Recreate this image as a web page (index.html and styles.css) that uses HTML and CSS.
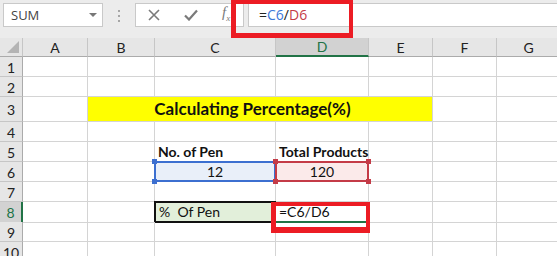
FILE: index.html
```html
<!DOCTYPE html>
<html lang="en">
<head>
    <meta charset="UTF-8">
    <title>Calculating Percentage</title>
    <link rel="stylesheet" href="styles.css">
</head>
<body>
    <div class="app">
        <!-- Formula bar -->
        <div class="toolbar">
            <div class="name-box">
                <span>SUM</span>
                <span class="caret"></span>
            </div>
            <div class="grip"><i></i><i></i><i></i></div>
            <div class="fx-buttons">
                <svg width="12" height="12" viewBox="0 0 12 12"><path d="M1 1 L11 11 M11 1 L1 11" stroke="#7a7a7a" stroke-width="1.6" fill="none"/></svg>
                <svg width="14" height="12" viewBox="0 0 14 12"><path d="M1 6.5 L5 10.5 L13 1.5" stroke="#7a7a7a" stroke-width="2.2" fill="none"/></svg>
                <span class="fx">f<sub>x</sub></span>
            </div>
            <div class="formula-input">=<span class="ref-c">C6</span>/<span class="ref-d">D6</span></div>
            <div class="callout callout-bar"></div>
        </div>

        <!-- Sheet -->
        <div class="sheet">
            <div class="row head-row">
                <div class="corner"><span class="corner-tri"></span></div>
                <div class="col-head">A</div>
                <div class="col-head">B</div>
                <div class="col-head">C</div>
                <div class="col-head active">D</div>
                <div class="col-head">E</div>
                <div class="col-head">F</div>
                <div class="col-head">G</div>
            </div>
            <div class="row">
                <div class="row-head">1</div>
                <div class="cell"></div><div class="cell"></div><div class="cell"></div><div class="cell"></div><div class="cell"></div><div class="cell"></div><div class="cell"></div>
            </div>
            <div class="row">
                <div class="row-head">2</div>
                <div class="cell"></div><div class="cell"></div><div class="cell"></div><div class="cell"></div><div class="cell"></div><div class="cell"></div><div class="cell"></div>
            </div>
            <div class="row tall">
                <div class="row-head">3</div>
                <div class="cell"></div>
                <div class="cell title">Calculating Percentage(%)</div>
                <div class="cell"></div><div class="cell"></div>
            </div>
            <div class="row">
                <div class="row-head">4</div>
                <div class="cell"></div><div class="cell"></div><div class="cell"></div><div class="cell"></div><div class="cell"></div><div class="cell"></div><div class="cell"></div>
            </div>
            <div class="row">
                <div class="row-head">5</div>
                <div class="cell"></div><div class="cell"></div>
                <div class="cell bold">No. of Pen</div>
                <div class="cell bold">Total Products</div>
                <div class="cell"></div><div class="cell"></div><div class="cell"></div>
            </div>
            <div class="row">
                <div class="row-head">6</div>
                <div class="cell"></div><div class="cell"></div>
                <div class="cell ref ref-blue">12
                    <span class="handle tl"></span><span class="handle tr"></span><span class="handle bl"></span><span class="handle br"></span>
                </div>
                <div class="cell ref ref-red">120
                    <span class="handle tl"></span><span class="handle tr"></span><span class="handle bl"></span><span class="handle br"></span>
                </div>
                <div class="cell"></div><div class="cell"></div><div class="cell"></div>
            </div>
            <div class="row">
                <div class="row-head">7</div>
                <div class="cell"></div><div class="cell"></div><div class="cell"></div><div class="cell"></div><div class="cell"></div><div class="cell"></div><div class="cell"></div>
            </div>
            <div class="row">
                <div class="row-head active">8</div>
                <div class="cell"></div><div class="cell"></div>
                <div class="cell label">%&nbsp; Of Pen</div>
                <div class="cell editing">=C6/D6</div>
                <div class="cell"></div><div class="cell"></div><div class="cell"></div>
            </div>
            <div class="row">
                <div class="row-head">9</div>
                <div class="cell"></div><div class="cell"></div><div class="cell"></div><div class="cell"></div><div class="cell"></div><div class="cell"></div><div class="cell"></div>
            </div>
            <div class="row">
                <div class="row-head">10</div>
                <div class="cell"></div><div class="cell"></div><div class="cell"></div><div class="cell"></div><div class="cell"></div><div class="cell"></div><div class="cell"></div>
            </div>
            <div class="callout callout-cell"></div>
        </div>
    </div>
</body>
</html>
```

FILE: styles.css
```css
body {
    margin: 0;
    padding: 0;
    font-family: Lato, "Liberation Sans", sans-serif;
    background-color: #ffffff;
}
.app {
    position: relative;
    width: 557px;
    height: 256px;
    overflow: hidden;
}

/* Formula bar */
.toolbar {
    position: relative;
    display: flex;
    align-items: flex-start;
    height: 38px;
    padding: 3px 0 0 3px;
    box-sizing: border-box;
    background-color: #ececec;
}
.toolbar > div {
    flex-shrink: 0;
}
.name-box {
    display: flex;
    align-items: center;
    justify-content: space-between;
    width: 100px;
    height: 24px;
    padding: 0 5px 0 7px;
    box-sizing: border-box;
    background-color: white;
    border: 1px solid #c9c9c9;
    font-family: "Open Sans", sans-serif;
    font-size: 13px;
    color: #444;
}
.caret {
    width: 0;
    height: 0;
    border-left: 4px solid transparent;
    border-right: 4px solid transparent;
    border-top: 4px solid #777;
}
.grip {
    display: flex;
    flex-direction: column;
    gap: 3px;
    width: 32px;
    padding-top: 7px;
    align-items: center;
}
.grip i {
    display: block;
    width: 2px;
    height: 2px;
    background-color: #a6a6a6;
}
.fx-buttons {
    display: flex;
    align-items: center;
    width: 109px;
    height: 24px;
    padding-left: 12px;
    box-sizing: border-box;
    background-color: white;
    border: 1px solid #c9c9c9;
}
.fx-buttons svg {
    flex-shrink: 0;
}
.fx-buttons svg + svg {
    margin-left: 24px;
}
.fx {
    margin-left: 24px;
    font-family: "Liberation Serif", serif;
    font-style: italic;
    font-size: 15px;
    line-height: 15px;
    color: #7a7a7a;
}
.fx sub {
    font-size: 9px;
}
.formula-input {
    flex: 1;
    height: 24px;
    margin-left: 4px;
    padding-left: 10px;
    box-sizing: border-box;
    background-color: white;
    border: 1px solid #c9c9c9;
    border-right: none;
    font-family: "Open Sans", sans-serif;
    font-size: 14px;
    line-height: 22px;
    color: #222;
}
.ref-c {
    color: #3c78d8;
}
.ref-d {
    color: #c43b47;
}

/* Red annotation rectangles */
.callout {
    position: absolute;
    border: 4px solid #ec1c24;
    box-sizing: border-box;
}
.callout-bar {
    left: 231px;
    top: 0;
    width: 122px;
    height: 38px;
    border-left-width: 5px;
    border-bottom-width: 5px;
}
.callout-cell {
    left: 271px;
    top: 164px;
    width: 99px;
    height: 31px;
    border-left-width: 5px;
    border-bottom-width: 6px;
}

/* Sheet grid */
.sheet {
    position: relative;
    font-size: 14px;
    color: #111;
}
.row {
    display: grid;
    grid-template-columns: 23px 65px 67px 121px 93px 64px 64px 64px;
    height: 20px;
}
.row.tall {
    height: 25px;
}
.head-row {
    height: 19px;
}
.corner,
.col-head,
.row-head {
    position: relative;
    display: flex;
    align-items: center;
    justify-content: center;
    box-sizing: border-box;
    background-color: #e6e6e6;
    border-right: 1px solid #c6c6c6;
    border-bottom: 1px solid #c6c6c6;
    color: #222;
}
.head-row .corner,
.head-row .col-head {
    border-bottom: 1px solid #ababab;
}
.row-head {
    border-right: 1px solid #ababab;
    padding-top: 1px;
}
.col-head.active {
    background-color: #d2d2d2;
    color: #217346;
    border-bottom: 2px solid #217346;
}
.row-head.active {
    background-color: #d2d2d2;
    color: #217346;
    border-right: 2px solid #217346;
}
.corner-tri {
    position: absolute;
    right: 3px;
    bottom: 3px;
    width: 0;
    height: 0;
    border-left: 12px solid transparent;
    border-bottom: 12px solid #b4b4b4;
}
.cell {
    position: relative;
    box-sizing: border-box;
    border-right: 1px solid #d4d4d4;
    border-bottom: 1px solid #d4d4d4;
    padding: 0 3px 1px;
    display: flex;
    align-items: flex-end;
    white-space: nowrap;
}
.title {
    grid-column: span 4;
    justify-content: center;
    align-items: center;
    padding-right: 18px;
    background-color: #ffff00;
    font-weight: bold;
    font-size: 17px;
}
.bold {
    font-weight: bold;
}
.ref {
    justify-content: center;
}
.ref::after {
    content: "";
    position: absolute;
    left: -1px;
    top: -1px;
    right: -1px;
    bottom: -1px;
    border: 2px solid;
}
.ref-blue {
    background-color: #e9eff9;
}
.ref-blue::after {
    border-color: #3c6fd0;
}
.ref-blue .handle {
    background-color: #3c6fd0;
}
.ref-red {
    background-color: #fbeaea;
}
.ref-red::after {
    border-color: #c43b47;
}
.ref-red .handle {
    background-color: #c43b47;
}
.handle {
    position: absolute;
    width: 5px;
    height: 5px;
    z-index: 2;
}
.handle.tl { left: -3px; top: -3px; }
.handle.tr { right: -3px; top: -3px; }
.handle.bl { left: -3px; bottom: -3px; }
.handle.br { right: -3px; bottom: -3px; }
.label {
    background-color: #e2efda;
    border: 2px solid #111;
    margin: -1px 0 0 -1px;
    padding-left: 3px;
}
.editing {
    border-right: 2px solid #217346;
    border-bottom: 2px solid #217346;
    padding-left: 3px;
}
```
